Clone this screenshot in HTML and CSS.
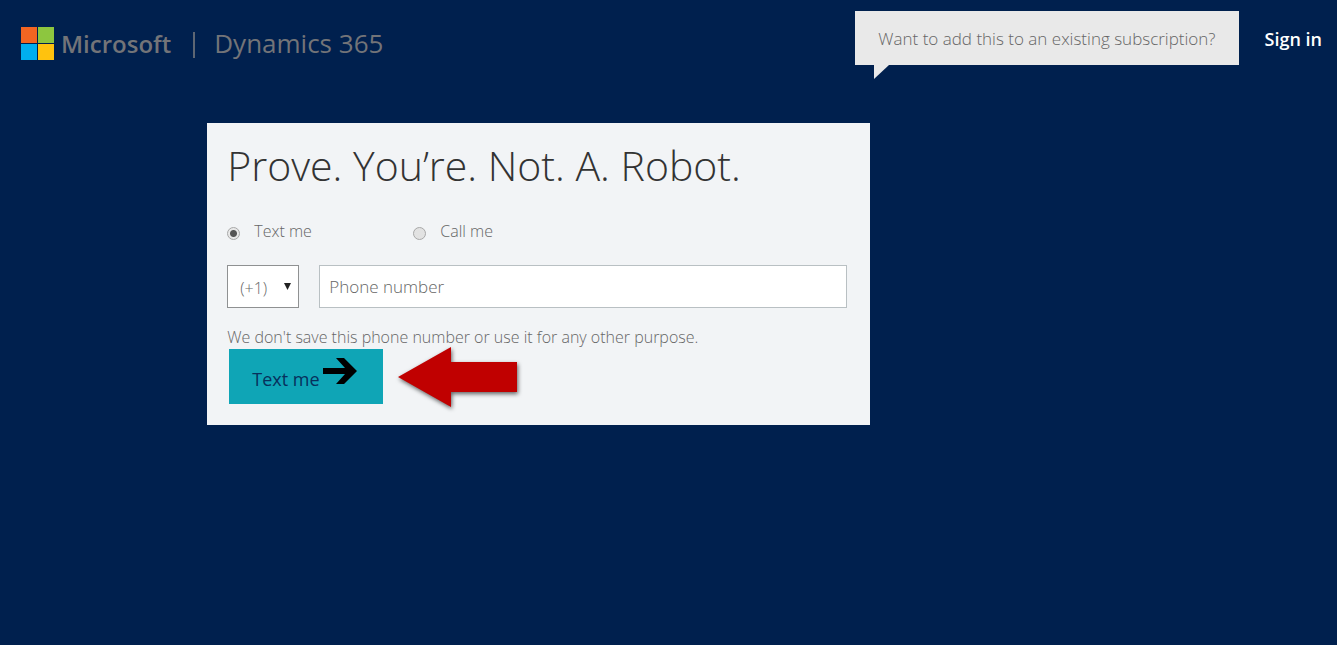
FILE: index.html
```html
<!DOCTYPE html>
<html lang="en">
<head>
<meta charset="utf-8">
<meta name="viewport" content="width=device-width, initial-scale=1">
<title>Microsoft Dynamics 365</title>
<link rel="stylesheet" href="styles.css">
</head>
<body>
<header class="header">
  <div class="brand">
    <svg class="brand-logo" viewBox="0 0 33 33" aria-hidden="true">
      <path fill="#f26522" d="M0 0h16v16H0z"/>
      <path fill="#8dc63f" d="M17 0h16v16H17z"/>
      <path fill="#00aeef" d="M0 17h16v16H0z"/>
      <path fill="#ffc20e" d="M17 17h16v16H17z"/>
    </svg>
    <span class="brand-name">Microsoft</span>
    <span class="brand-divider"></span>
    <span class="brand-product">Dynamics 365</span>
  </div>
  <div class="account">
    <div class="bubble">Want to add this to an existing subscription?</div>
    <a class="sign-in" href="#">Sign in</a>
  </div>
</header>
<main class="main">
  <form class="card">
    <h1 class="title">Prove. You’re. Not. A. Robot.</h1>
    <div class="methods">
      <label class="method"><input class="radio" type="radio" name="method" checked><span>Text me</span></label>
      <label class="method"><input class="radio" type="radio" name="method"><span>Call me</span></label>
    </div>
    <div class="phone-row">
      <div class="code">
        <select class="code-select" aria-label="Country code"><option>(+1)</option></select>
        <svg class="code-caret" viewBox="0 0 7 7" aria-hidden="true"><path d="M0 0h7L3.5 7z"/></svg>
      </div>
      <input class="phone" type="tel" aria-label="Phone number" placeholder="Phone number">
    </div>
    <p class="note">We don't save this phone number or use it for any other purpose.</p>
    <div class="actions">
      <button class="submit" type="button">
        <span>Text me</span>
        <svg class="submit-arrow" viewBox="0 0 34 26" aria-hidden="true"><path d="M0 10h22L13 0h8l13 13-13 13h-8l9-10H0z"/></svg>
      </button>
      <svg class="pointer" viewBox="0 0 119 60" aria-hidden="true"><path fill="#c00000" d="M0 30L53 0v15h66v30H53v15z"/></svg>
    </div>
  </form>
</main>
</body>
</html>
```
FILE: styles.css
```css
* { box-sizing: border-box; }

body {
  margin: 0;
  min-height: 100vh;
  background: #00204e;
  color: #666;
  font-family: "Open Sans", "Noto Sans", sans-serif;
  font-size: 16px;
  font-weight: 300;
  line-height: 24px;
}

.header {
  display: flex;
  justify-content: space-between;
  align-items: flex-start;
  padding: 11px 15px 0 21px;
}

.brand {
  display: flex;
  align-items: center;
  padding-top: 16px;
  color: #737478;
  font-size: 24px;
  line-height: 33px;
}
.brand-logo { width: 33px; height: 33px; margin-right: 7px; }
.brand-name { font-weight: 600; }
.brand-divider { width: 2px; height: 26px; margin: 2px 19px 0 22px; background: #5d6673; }
.brand-product { font-size: 26px; font-weight: 400; }

.account { display: flex; align-items: center; gap: 26px; }
.bubble {
  position: relative;
  padding: 16px 23px 14px;
  background: #e9e9e9;
  font-size: 17px;
}
.bubble::after {
  content: "";
  position: absolute;
  top: 100%;
  left: 19px;
  border-top: 14px solid #e9e9e9;
  border-right: 15px solid transparent;
}
.sign-in {
  padding-top: 2px;
  color: #fff;
  font-size: 18px;
  font-weight: 600;
  text-decoration: none;
}

.main { padding: 58px 16px 0 15.5%; }
.card {
  max-width: 663px;
  padding: 14px 23px 21px 20px;
  background: #f2f4f6;
}
.title {
  margin: 0;
  color: #333;
  font-size: 41px;
  font-weight: 300;
  line-height: 56px;
}

.methods { display: flex; padding-top: 25px; }
.method { display: flex; align-items: center; gap: 14px; width: 186px; line-height: 26px; }
.radio {
  appearance: none;
  width: 13px;
  height: 13px;
  margin: 4px 0 0;
  border: 1px solid #a8a8a8;
  border-radius: 50%;
  background: #e2e2e2;
}
.radio:checked { background: radial-gradient(circle, #555 3px, #e8e8e8 4px); }

.phone-row { display: flex; align-items: center; gap: 20px; padding-top: 21px; }
.code { position: relative; width: 72px; }
.code-select,
.phone {
  width: 100%;
  height: 43px;
  border: 1px solid #8f9192;
  border-radius: 0;
  background: #fff;
  color: #666;
  font: inherit;
}
.code-select { display: block; appearance: none; padding: 3px 12px 0; }
.code-caret {
  position: absolute;
  top: 18px;
  right: 8px;
  width: 7px;
  height: 7px;
  fill: #222;
  pointer-events: none;
}
.phone { flex: 1; min-width: 0; padding: 0 9px; border-color: #b9c0c3; font-size: 17px; }
.phone::placeholder { color: #666; opacity: 1; }

.note { margin: 0; padding-top: 17px; }

.actions { display: flex; align-items: center; gap: 15px; padding-left: 2px; }
.submit {
  display: flex;
  gap: 3px;
  width: 154px;
  height: 55px;
  padding: 9px 23px;
  border: 0;
  background: #0fa5b6;
  color: #07305c;
  font: inherit;
  font-size: 18px;
  font-weight: 400;
  white-space: nowrap;
}
.submit span { padding-top: 9px; }
.submit-arrow { flex: none; width: 34px; height: 26px; }
.pointer {
  width: 119px;
  height: 60px;
  margin: -3px 0;
  overflow: visible;
  filter: drop-shadow(1px 2px 2px rgba(0, 0, 0, 0.6));
}
```
